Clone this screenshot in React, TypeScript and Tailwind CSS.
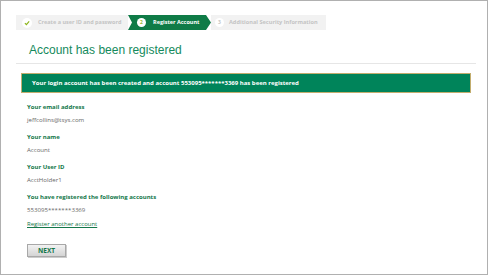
import React from "react";

const Label = ({ children }: { children: React.ReactNode }) => (
  <div className="text-[6px] font-bold leading-[8px] text-[#13774a]">{children}</div>
);
const Value = ({ children }: { children: React.ReactNode }) => (
  <div className="mt-[5px] text-[6.1px] leading-[8px] text-[#666]">{children}</div>
);

export default function App() {
  return (
    <div
      className="w-[488px] h-[275px] border border-[#b0b0b0] bg-white overflow-hidden"
      style={{ fontFamily: '"Open Sans", "Noto Sans", sans-serif' }}
    >
      <div className="px-[15px] pt-[14px]">
        {/* Breadcrumb */}
        <div className="flex h-[15px] items-stretch w-[310px]">
          <div className="flex items-center bg-[#f2f2f2] w-[112px] pl-[6px]">
            <div className="w-[10px] h-[10px] rounded-full bg-white flex items-center justify-center">
              <svg width="6" height="6" viewBox="0 0 10 10">
                <path d="M1.5 5.2 L4 7.6 L8.6 2.4" fill="none" stroke="#8db51b" strokeWidth="2" />
              </svg>
            </div>
            <span className="ml-[6px] text-[5.5px] font-bold text-[#c4c4c4] whitespace-nowrap">Create a user ID and password</span>
          </div>
          <div className="flex items-center bg-[#0f7b47] w-[83px] pl-[9px] [clip-path:polygon(0_0,calc(100%-5px)_0,100%_50%,calc(100%-5px)_100%,0_100%,4px_50%)]">
            <div className="w-[9px] h-[9px] rounded-full bg-white flex items-center justify-center text-[5px] font-bold text-[#9ab82a]">2</div>
            <span className="ml-[7px] text-[5.5px] font-bold text-white whitespace-nowrap">Register Account</span>
          </div>
          <div className="flex items-center bg-[#f2f2f2] flex-1 pl-[4px]">
            <div className="w-[9px] h-[9px] rounded-full bg-white flex items-center justify-center text-[5px] font-bold text-[#c4c4c4]">3</div>
            <span className="ml-[5px] text-[5.6px] font-bold text-[#c4c4c4] whitespace-nowrap">Additional Security Information</span>
          </div>
        </div>

        {/* Title */}
        <div
          className="mt-[13px] ml-[13px] text-[12px] leading-[14px] text-[#148a5c]"
          style={{ fontFamily: '"Liberation Sans", Arial, sans-serif' }}
        >
          Account has been registered
        </div>
        <div className="mt-[6px] h-px bg-[#e6e6e6] w-[460px]" />

        {/* Banner */}
        <div className="mt-[9px] ml-[5px] w-[450px] h-[20px] bg-[#00845a] border border-[#c2ad6e] flex items-center pl-[10px]">
          <span className="text-[6px] font-bold text-white whitespace-nowrap">
            Your login account has been created and account 553095*******3369 has been registered
          </span>
        </div>

        {/* Details */}
        <div className="ml-[11px] mt-[10px]">
          <Label>Your email address</Label>
          <Value>jeffcollins@tsys.com</Value>
          <div className="mt-[9px]"><Label>Your name</Label></div>
          <Value>Account</Value>
          <div className="mt-[9px]"><Label>Your User ID</Label></div>
          <Value>AcctHolder1</Value>
          <div className="mt-[9px]"><Label>You have registered the following accounts</Label></div>
          <Value>553095*******3369</Value>
          <div className="mt-[6px] text-[6px] leading-[8px] text-[#13774a] underline">Register another account</div>
          <button className="mt-[16px] w-[39px] h-[13px] border border-[#a8a8a8] bg-gradient-to-b from-[#f2f2f2] to-[#d4d4d4] text-[6.5px] font-bold text-[#13774a] flex items-center justify-center shadow-[1px_1px_0_#ccc]">
            NEXT
          </button>
        </div>
      </div>
    </div>
  );
}
